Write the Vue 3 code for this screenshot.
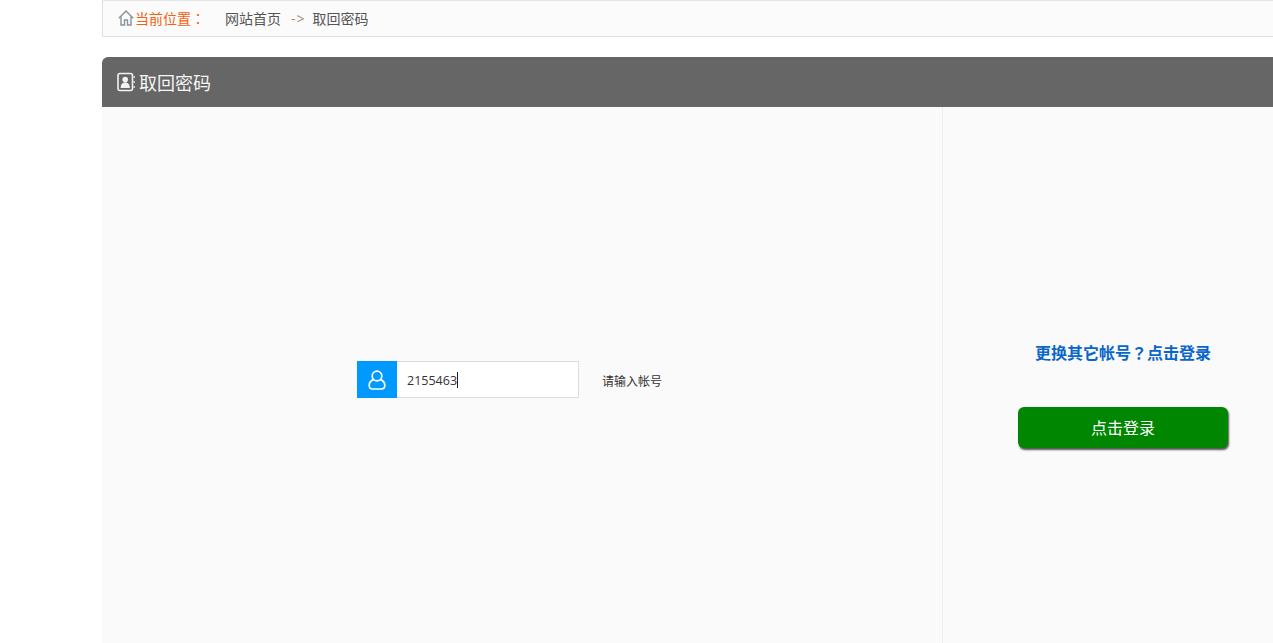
<script setup>
const crumbs = ['网站首页']
</script>

<template>
  <div class="page">
    <main class="main">
      <nav class="crumb">
        <svg class="home" width="16" height="16" viewBox="0 0 16 16" fill="none" stroke="#8a929c" stroke-width="1.4">
          <path d="M0.8 8.2 L8 1 L15.2 8.2" />
          <path d="M3 6.5 V15 H6.5 V10 H9.5 V15 H13 V6.5" />
        </svg>
        <span class="here">当前位置<span class="punct">：</span></span>
        <a v-for="c in crumbs" :key="c" class="link">{{ c }}</a>
        <span class="arrow">-&gt;</span>
        <span class="link current">取回密码</span>
      </nav>

      <section class="card">
        <header class="head">
          <svg class="book" width="18" height="20" viewBox="0 0 18 20" fill="none">
            <rect x="1" y="1.5" width="14.5" height="17" rx="2" stroke="#f2f2f2" stroke-width="1.6" />
            <circle cx="8.2" cy="7.6" r="2.8" fill="#f2f2f2" />
            <path d="M3.6 16 C3.6 12 5.6 10.4 8.2 10.4 C10.8 10.4 12.8 12 12.8 16 Z" fill="#f2f2f2" />
            <path d="M16.5 5 H18 M16.5 10 H18 M16.5 15 H18" stroke="#f2f2f2" stroke-width="1.4" />
          </svg>
          <h1 class="title">取回密码</h1>
        </header>

        <div class="body">
          <div class="left">
            <div class="field">
              <span class="addon">
                <svg width="18" height="20" viewBox="0 0 18 20" fill="none" stroke="#fff" stroke-width="1.7">
                  <circle cx="9" cy="6" r="4.8" />
                  <path d="M5.6 9.6 C3 10.6 1.2 12.6 1.2 15.2 C1.2 17.6 2.8 19 4.6 19 H13.4 C15.2 19 16.8 17.6 16.8 15.2 C16.8 12.6 15 10.6 12.4 9.6" />
                </svg>
              </span>
              <div class="input"><span class="value">2155463</span><i class="caret"></i></div>
            </div>
            <span class="hint">请输入帐号</span>
          </div>

          <aside class="right">
            <p class="other">更换其它帐号<span class="punct">？</span>点击登录</p>
            <button class="login">点击登录</button>
          </aside>
        </div>
      </section>
    </main>
  </div>
</template>

<style>
html, body { margin: 0; overflow: hidden; background: #fff; }
</style>

<style scoped>
.page {
  height: 643px;
  width: 1273px;
  overflow: hidden;
  padding-left: 102px;
  box-sizing: border-box;
  font-family: "Noto Sans CJK SC", "Open Sans", sans-serif;
}
.main {
  width: 1190px;
  height: 643px;
  display: flex;
  flex-direction: column;
}
.punct { font-family: "Noto Sans CJK TC", sans-serif; }
.crumb {
  height: 37px;
  box-sizing: border-box;
  border: 1px solid #e0e0e0;
  border-top-color: #e6e6e6;
  background: #fbfbfb;
  display: flex;
  align-items: center;
  padding-left: 15px;
  padding-bottom: 2px;
  font-size: 14px;
  color: #555;
}
.home { margin-right: 1px; margin-top: 1px; }
.here { color: #f4610f; width: 90px; }
.link { color: #555; }
.arrow {
  color: #a08e80;
  margin: 2px 7px 0 10px;
  font-family: "Open Sans", sans-serif;
  font-size: 14px;
  letter-spacing: 1px;
}
.card {
  margin-top: 20px;
  flex: 1;
  display: flex;
  flex-direction: column;
}
.head {
  height: 50px;
  background: #666;
  border-radius: 6px 0 0 0;
  display: flex;
  align-items: center;
  padding-left: 15px;
  gap: 4px;
}
.title {
  margin: 0;
  font-size: 18px;
  font-weight: 400;
  color: #f4f4f4;
}
.body {
  flex: 1;
  display: flex;
  background: #fafafa;
}
.left {
  box-sizing: border-box;
  padding: 254px 0 0 255px;
  display: flex;
  align-items: flex-start;
  border-right: 1px solid #eeeeee;
  width: 841px;
}
.field { display: flex; height: 37px; }
.addon {
  width: 40px;
  background: #0099ff;
  display: flex;
  align-items: center;
  justify-content: center;
}
.input {
  width: 182px;
  box-sizing: border-box;
  border: 1px solid #dddddd;
  border-left: 0;
  background: #fff;
  display: flex;
  align-items: center;
  padding-left: 10px;
  font-family: "Open Sans", sans-serif;
  font-size: 12.5px;
  color: #333;
}
.value { position: relative; top: 1px; }
.caret { width: 1px; height: 16px; background: #222; }
.hint {
  margin-left: 23px;
  line-height: 39px;
  font-size: 12px;
  color: #333;
}
.right {
  flex: 1;
  display: flex;
  flex-direction: column;
  padding: 231px 0 0 75px;
}
.other {
  margin: 0;
  width: 210px;
  text-align: center;
  font-size: 16px;
  font-weight: 700;
  line-height: 28px;
  color: #0a66c8;
}
.login {
  margin-top: 41px;
  width: 210px;
  height: 41px;
  border: 0;
  border-radius: 6px;
  padding-bottom: 3px;
  background: #008600;
  color: #fff;
  font-family: inherit;
  font-size: 16px;
  box-shadow: 1px 2px 2px #555;
}
</style>
